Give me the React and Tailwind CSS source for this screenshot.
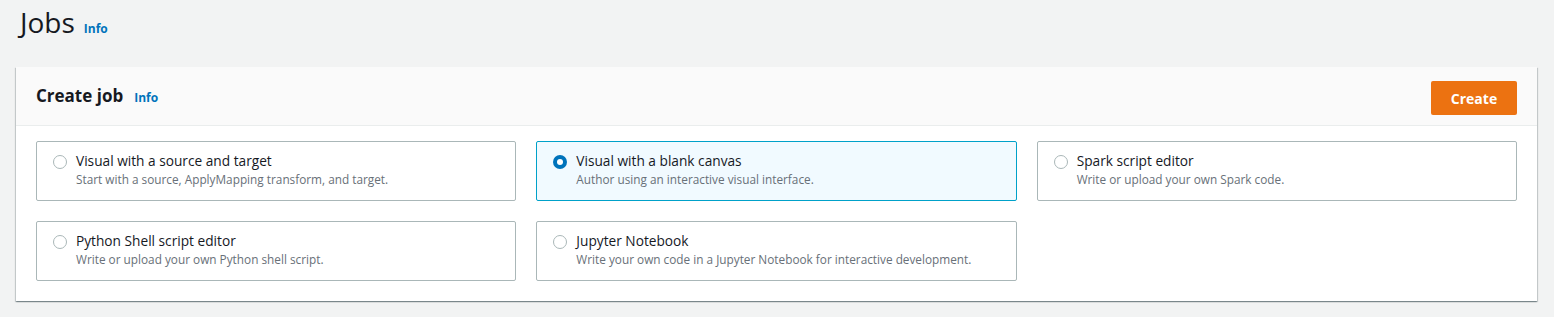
import React from "react";

const tiles = [
  { t: "Visual with a source and target", d: "Start with a source, ApplyMapping transform, and target." },
  { t: "Visual with a blank canvas", d: "Author using an interactive visual interface.", sel: true },
  { t: "Spark script editor", d: "Write or upload your own Spark code." },
  { t: "Python Shell script editor", d: "Write or upload your own Python shell script." },
  { t: "Jupyter Notebook", d: "Write your own code in a Jupyter Notebook for interactive development." },
];

function Radio({ sel }) {
  return sel ? (
    <span className="mt-[3px] flex h-[14px] w-[14px] shrink-0 items-center justify-center rounded-full bg-[#0073bb]">
      <span className="h-[6px] w-[6px] rounded-full bg-white" />
    </span>
  ) : (
    <span className="mt-[3px] h-[14px] w-[14px] shrink-0 rounded-full border border-[#aab7b8] bg-white" />
  );
}

export default function App() {
  return (
    <div className="min-h-[317px] bg-[#f2f3f3] pl-4 pr-[17px] pt-[4px] pb-4" style={{ fontFamily: '"Open Sans", "Noto Sans", sans-serif' }}>
      <div className="flex items-baseline gap-[9px] pl-[4px] h-[63px]">
        <h1 className="text-[28px] leading-[36px] text-[#16191f] font-normal">Jobs</h1>
        <a className="text-[12px] font-bold text-[#0073bb]">Info</a>
      </div>
      <div className="bg-white shadow-[0_1px_1px_0_rgba(0,28,36,0.3),1px_1px_1px_0_rgba(0,28,36,0.15),-1px_1px_1px_0_rgba(0,28,36,0.15)]">
        <div className="flex h-[59px] items-center justify-between border-b border-[#eaeded] bg-[#fafafa] px-5">
          <div className="flex items-baseline gap-[11px]">
            <h2 className="text-[17px] font-bold text-[#16191f]">Create job</h2>
            <a className="text-[12px] font-bold text-[#0073bb]">Info</a>
          </div>
          <button className="mt-[4px] h-[34px] w-[86px] rounded-[2px] bg-[#ec7211] text-[14px] font-bold text-white">Create</button>
        </div>
        <div className="grid grid-cols-3 gap-5 p-5 pt-[15px]">
          {tiles.map((x) => (
            <div
              key={x.t}
              className={`flex h-[60px] gap-[9px] rounded-[2px] border px-4 pt-[10px] ${x.sel ? "border-[#00a1c9] bg-[#f1faff]" : "border-[#aab7b8] bg-white"}`}
            >
              <Radio sel={x.sel} />
              <div className="flex flex-col">
                <span className="text-[13.7px] leading-[18px] text-[#16191f]">{x.t}</span>
                <span className="text-[11.8px] leading-[19px] text-[#687078]">{x.d}</span>
              </div>
            </div>
          ))}
        </div>
      </div>
    </div>
  );
}
